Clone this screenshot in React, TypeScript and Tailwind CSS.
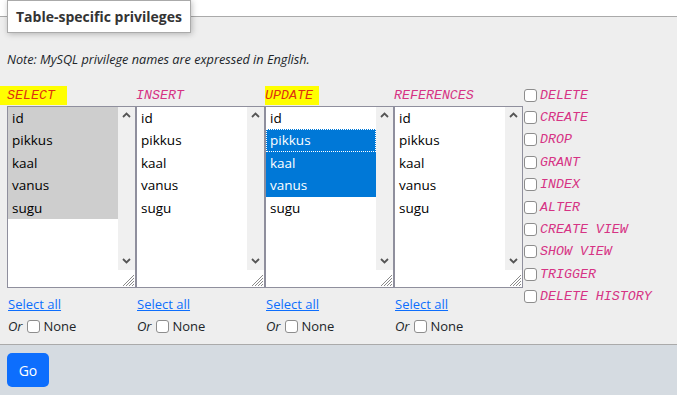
import React from 'react';

const fields = ['id', 'pikkus', 'kaal', 'vanus', 'sugu'];

const columns = [
    { name: 'SELECT', mark: true, selected: [0, 1, 2, 3, 4], tone: 'gray', focus: -1 },
    { name: 'INSERT', mark: false, selected: [], tone: '', focus: -1 },
    { name: 'UPDATE', mark: true, selected: [1, 2, 3], tone: 'blue', focus: 1 },
    { name: 'REFERENCES', mark: false, selected: [], tone: '', focus: -1 },
];

const privileges = [
    'DELETE',
    'CREATE',
    'DROP',
    'GRANT',
    'INDEX',
    'ALTER',
    'CREATE VIEW',
    'SHOW VIEW',
    'TRIGGER',
    'DELETE HISTORY',
];

function Box() {
    return (
        <span className="block h-[13px] w-[13px] shrink-0 rounded-[3px] border border-[#8d8d8d] bg-white" />
    );
}

function Chevron({ up }: { up?: boolean }) {
    return (
        <svg width="9" height="6" viewBox="0 0 9 6" className="block">
            <polyline
                points={up ? '1,5 4.5,1.5 8,5' : '1,1 4.5,4.5 8,1'}
                fill="none"
                stroke="#555"
                strokeWidth="1.8"
            />
        </svg>
    );
}

function ListBox({ col }: { col: (typeof columns)[number] }) {
    return (
        <div className="flex h-[182px] w-[129px] border border-[#8f8f9d] bg-white">
            <div className="flex-1">
                {fields.map((f, i) => {
                    const on = col.selected.includes(i);
                    let cls = 'text-black';
                    if (on && col.tone === 'gray') cls = 'bg-[#cecece] text-black';
                    if (on && col.tone === 'blue') cls = 'bg-[#0078d7] text-white';
                    const focus =
                        col.focus === i
                            ? 'outline-1 outline-dotted outline-white -outline-offset-1'
                            : '';
                    return (
                        <div
                            key={f}
                            className={`flex h-[22.4px] items-center pl-[4px] text-[13.5px] ${cls} ${focus}`}
                        >
                            {f}
                        </div>
                    );
                })}
            </div>
            <div className="flex w-[17px] flex-col">
                <div className="flex flex-1 flex-col items-center justify-between bg-[#f0f0f0] pt-[5px] pb-[6px]">
                    <Chevron up />
                    <Chevron />
                </div>
                <div className="flex h-[17px] items-end justify-end bg-white">
                    <svg width="14" height="14" viewBox="0 0 14 14">
                        <g stroke="#8a8a8a" strokeWidth="1">
                            <line x1="2" y1="13" x2="13" y2="2" />
                            <line x1="5" y1="13" x2="13" y2="5" />
                            <line x1="8" y1="13" x2="13" y2="8" />
                            <line x1="11" y1="13" x2="13" y2="11" />
                        </g>
                    </svg>
                </div>
            </div>
        </div>
    );
}

export default function App() {
    return (
        <div className="h-[395px] w-[677px] overflow-hidden bg-white font-['Open_Sans','Noto_Sans',sans-serif] text-[#212529]">
            <fieldset className="border-t border-[#aaa] bg-[#eee] px-[7px] pb-[8px]">
                <legend className="border border-[#aaa] bg-white px-[8px] py-[6px] text-[14px] leading-[19px] font-bold text-[#333] shadow-[1px_1px_6px_rgba(0,0,0,0.25)]">
                    Table-specific privileges
                </legend>

                <p className="mt-[18px] text-[12.7px] leading-[17px] italic">
                    Note: MySQL privilege names are expressed in English.
                </p>

                <div className="mt-[18px] flex">
                    {columns.map((col) => (
                        <div key={col.name} className="w-[129px]">
                            <div className="h-[20px] font-['Liberation_Mono',monospace] text-[13.3px] italic leading-[19px]">
                                {col.mark ? (
                                    <span
                                        className={`inline-block bg-[#ffff00] text-[#de3010] ${
                                            col.name === 'SELECT'
                                                ? '-ml-[7px] pr-[12px] pl-[7px]'
                                                : 'pr-[6px]'
                                        }`}
                                    >
                                        {col.name}
                                    </span>
                                ) : (
                                    <span className="text-[#d63384]">{col.name}</span>
                                )}
                            </div>
                            <ListBox col={col} />
                            <div className="mt-[6px] pl-[1px] text-[13px] leading-[20px]">
                                <a href="#" className="text-[#0d6efd] underline">
                                    Select all
                                </a>
                            </div>
                            <div className="mt-[2px] flex items-center gap-[4px] pl-[1px] text-[13px] leading-[20px]">
                                <i>Or</i>
                                <Box />
                                <span>None</span>
                            </div>
                        </div>
                    ))}

                    <div className="-mt-[2px] ml-[1px] flex flex-col">
                        {privileges.map((p) => (
                            <label
                                key={p}
                                className="flex h-[22.4px] items-center gap-[3px]"
                            >
                                <Box />
                                <span className="font-['Liberation_Mono',monospace] text-[13.3px] leading-[17px] text-[#d63384] italic">
                                    {p}
                                </span>
                            </label>
                        ))}
                    </div>
                </div>
            </fieldset>

            <div className="border-t border-b border-[#aaa] bg-[#d5dbe1] px-[7px] py-[8px]">
                <button className="h-[34px] w-[42px] rounded-[5px] bg-[#0d6efd] text-[14px] text-white">
                    Go
                </button>
            </div>
        </div>
    );
}
